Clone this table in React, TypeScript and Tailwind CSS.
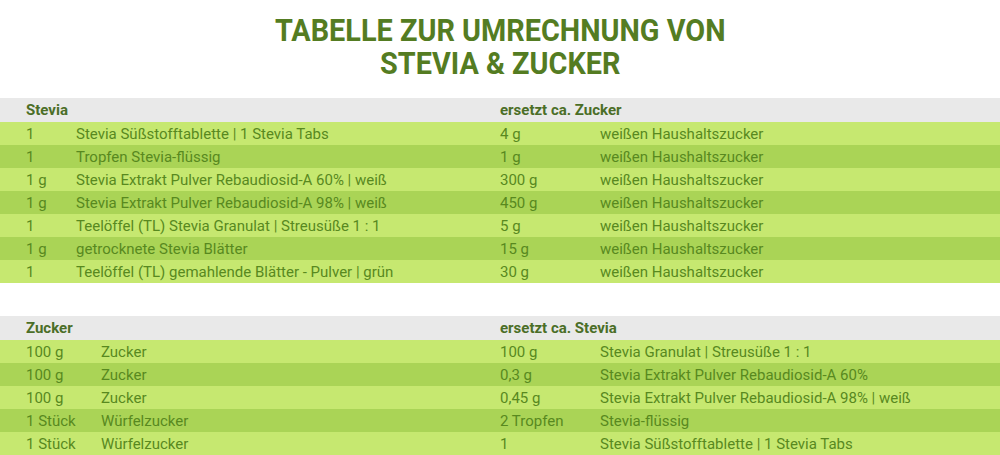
import React from "react";

const stevia: [string, string, string, string][] = [
  ["1", "Stevia Süßstofftablette | 1 Stevia Tabs", "4 g", "weißen Haushaltszucker"],
  ["1", "Tropfen Stevia-flüssig", "1 g", "weißen Haushaltszucker"],
  ["1 g", "Stevia Extrakt Pulver Rebaudiosid-A 60% | weiß", "300 g", "weißen Haushaltszucker"],
  ["1 g", "Stevia Extrakt Pulver Rebaudiosid-A 98% | weiß", "450 g", "weißen Haushaltszucker"],
  ["1", "Teelöffel (TL) Stevia Granulat | Streusüße 1 : 1", "5 g", "weißen Haushaltszucker"],
  ["1 g", "getrocknete Stevia Blätter", "15 g", "weißen Haushaltszucker"],
  ["1", "Teelöffel (TL) gemahlende Blätter - Pulver | grün", "30 g", "weißen Haushaltszucker"],
];

const zucker: [string, string, string, string][] = [
  ["100 g", "Zucker", "100 g", "Stevia Granulat | Streusüße 1 : 1"],
  ["100 g", "Zucker", "0,3 g", "Stevia Extrakt Pulver Rebaudiosid-A 60%"],
  ["100 g", "Zucker", "0,45 g", "Stevia Extrakt Pulver Rebaudiosid-A 98% | weiß"],
  ["1 Stück", "Würfelzucker", "2 Tropfen", "Stevia-flüssig"],
  ["1 Stück", "Würfelzucker", "1", "Stevia Süßstofftablette | 1 Stevia Tabs"],
];

function Table({
  head1,
  head2,
  rows,
  firstCol,
}: {
  head1: string;
  head2: string;
  rows: [string, string, string, string][];
  firstCol: string;
}) {
  return (
    <div className="w-full">
      <div className="flex h-[24px] items-center bg-[#e9e9e9] pl-[26px] pt-[1px] text-[15px] font-bold text-[#4b6e27]">
        <div className="w-[474px]">{head1}</div>
        <div>{head2}</div>
      </div>
      {rows.map((r, i) => (
        <div
          key={i}
          className={`flex h-[23px] items-center pl-[26px] pt-[1px] text-[15px] text-[#58891f] ${
            i % 2 === 0 ? "bg-[#c6e870]" : "bg-[#aad456]"
          }`}
        >
          <div className={firstCol}>{r[0]}</div>
          <div className="flex-1 whitespace-nowrap">{r[1]}</div>
          <div className="w-[100px] shrink-0">{r[2]}</div>
          <div className="w-[400px] shrink-0 whitespace-nowrap">{r[3]}</div>
        </div>
      ))}
    </div>
  );
}

export default function App() {
  return (
    <div
      className="w-[1000px] h-[455px] overflow-hidden bg-white"
      style={{ fontFamily: "Roboto, 'Liberation Sans', sans-serif" }}
    >
      <div className="flex h-[98px] justify-center pt-[14px]">
        <h1 className="scale-x-[0.93] whitespace-nowrap text-center text-[31px] font-bold leading-[33px] text-[#547c22]">
          TABELLE ZUR UMRECHNUNG VON
          <br />
          STEVIA &amp; ZUCKER
        </h1>
      </div>
      <Table head1="Stevia" head2="ersetzt ca. Zucker" rows={stevia} firstCol="w-[50px] shrink-0" />
      <div className="mt-[33px]">
        <Table head1="Zucker" head2="ersetzt ca. Stevia" rows={zucker} firstCol="w-[75px] shrink-0" />
      </div>
    </div>
  );
}
